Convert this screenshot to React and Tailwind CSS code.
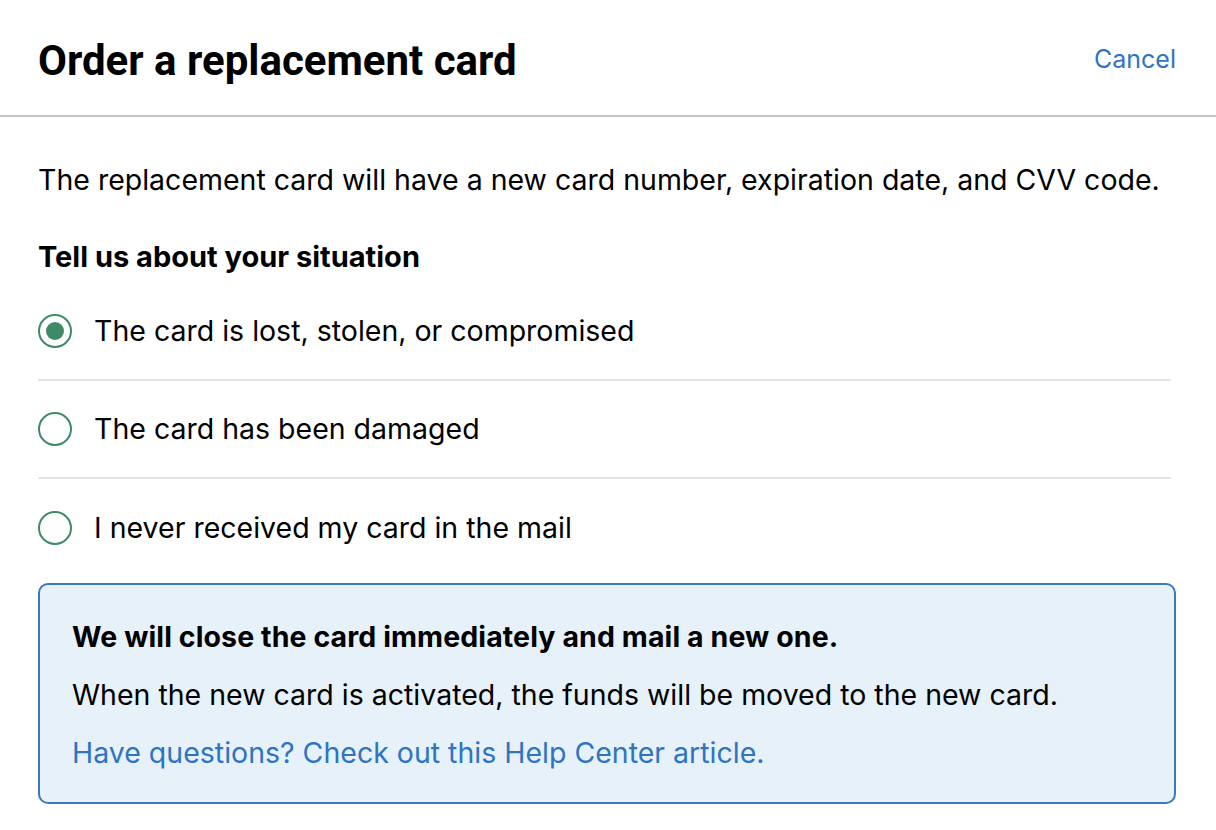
import React, { useState } from "react";

const options = [
  "The card is lost, stolen, or compromised",
  "The card has been damaged",
  "I never received my card in the mail",
];

export default function App() {
  const [selected, setSelected] = useState(0);

  return (
    <div className="min-h-[830px] bg-white text-black font-['Inter',sans-serif]">
      {/* Header */}
      <div className="h-[117px] flex items-center justify-between pl-[38px] pr-[40px] pt-[5px] border-b-2 border-[#c6c6c6]">
        <h1 className="text-[42px] font-bold font-['Roboto',sans-serif]">
          Order a replacement card
        </h1>
        <button className="text-[25px] text-[#2e74c2]">Cancel</button>
      </div>

      <div className="px-[38px] pr-[40px]">
        <p className="text-[28.5px] leading-[36px] mt-[45px]">
          The replacement card will have a new card number, expiration date, and CVV code.
        </p>
        <h2 className="text-[29px] font-bold leading-[36px] mt-[41px]">
          Tell us about your situation
        </h2>

        {/* Radio options */}
        <div className="mt-[8px]">
          {options.map((label, i) => (
            <div
              key={label}
              onClick={() => setSelected(i)}
              className={`flex items-center h-[98px] cursor-pointer ${
                i < options.length - 1 ? "border-b-2 border-[#e4e4e4] mr-[5px]" : ""
              }`}
            >
              <span className="w-[34px] h-[34px] rounded-full border-2 border-[#3f8a66] flex items-center justify-center shrink-0">
                {selected === i && <span className="w-[18px] h-[18px] rounded-full bg-[#3f8a66]" />}
              </span>
              <span className="ml-[22px] text-[28.5px]">{label}</span>
            </div>
          ))}
        </div>

        {/* Info box */}
        <div className="mt-[6px] w-[1138px] h-[221px] border-2 border-[#3a78c0] rounded-[10px] bg-[#e6f1f9] pl-[32px] pt-[34px]">
          <p className="text-[28.5px] font-bold leading-[36px] tracking-[0.1px]">
            We will close the card immediately and mail a new one.
          </p>
          <p className="text-[28.5px] leading-[36px] mt-[22px]">
            When the new card is activated, the funds will be moved to the new card.
          </p>
          <a href="#" className="block text-[28.5px] leading-[36px] mt-[22px] text-[#2e74c2]">
            Have questions? Check out this Help Center article.
          </a>
        </div>
      </div>
    </div>
  );
}
